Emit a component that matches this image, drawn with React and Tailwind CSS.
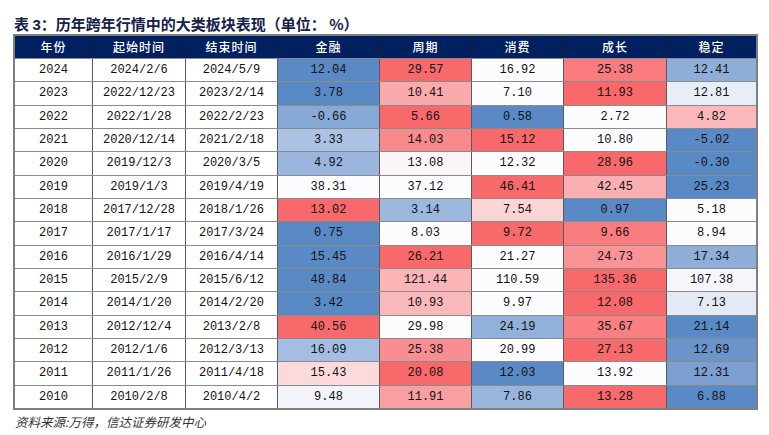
import React from "react";

const W = "#fcfcff";
const B = "#5a8ac6";
const R = "#f8696b";

const rows = [
  ["2024", "2024/2/6", "2024/5/9", ["12.04", B], ["29.57", R], ["16.92", W], ["25.38", "#f97b7d"], ["12.41", "#8eaed8"]],
  ["2023", "2022/12/23", "2023/2/14", ["3.78", B], ["10.41", "#fbaaac"], ["7.10", W], ["11.93", R], ["12.81", "#e8eef8"]],
  ["2022", "2022/1/28", "2022/2/23", ["-0.66", "#87a9d5"], ["5.66", R], ["0.58", B], ["2.72", W], ["4.82", "#fbb8ba"]],
  ["2021", "2020/12/14", "2021/2/18", ["3.33", "#aac2e3"], ["14.03", "#f98a8c"], ["15.12", R], ["10.80", W], ["-5.02", B]],
  ["2020", "2019/12/3", "2020/3/5", ["4.92", "#9ab6de"], ["13.08", "#fcf6f8"], ["12.32", W], ["28.96", R], ["-0.30", B]],
  ["2019", "2019/1/3", "2019/4/19", ["38.31", W], ["37.12", W], ["46.41", R], ["42.45", "#fab0b2"], ["25.23", B]],
  ["2018", "2017/12/28", "2018/1/26", ["13.02", R], ["3.14", "#9cb8df"], ["7.54", "#fcd4d6"], ["0.97", B], ["5.18", W]],
  ["2017", "2017/1/17", "2017/3/24", ["0.75", B], ["8.03", W], ["9.72", R], ["9.66", "#f97c7e"], ["8.94", W]],
  ["2016", "2016/1/29", "2016/4/14", ["15.45", B], ["26.21", R], ["21.27", W], ["24.73", "#f99395"], ["17.34", "#8eaed8"]],
  ["2015", "2015/2/9", "2015/6/12", ["48.84", B], ["121.44", "#fbb5b7"], ["110.59", W], ["135.36", R], ["107.38", "#f4f6fc"]],
  ["2014", "2014/1/20", "2014/2/20", ["3.42", B], ["10.93", "#fbb8ba"], ["9.97", W], ["12.08", R], ["7.13", "#e3eaf6"]],
  ["2013", "2012/12/4", "2013/2/8", ["40.56", R], ["29.98", W], ["24.19", "#92b1da"], ["35.67", "#f97f81"], ["21.14", B]],
  ["2012", "2012/1/6", "2012/3/13", ["16.09", "#a3bee2"], ["25.38", "#f98e90"], ["20.99", W], ["27.13", R], ["12.69", "#6a95cb"]],
  ["2011", "2011/1/26", "2011/4/18", ["15.43", "#fcdadc"], ["20.08", R], ["12.03", B], ["13.92", W], ["12.31", "#7a9fd0"]],
  ["2010", "2010/2/8", "2010/4/2", ["9.48", "#f3f3fc"], ["11.91", "#fa9fa1"], ["7.86", "#98b5dd"], ["13.28", R], ["6.88", B]],
];

const headers = ["年份", "起始时间", "结束时间", "金融", "周期", "消费", "成长", "稳定"];
const cols = "grid grid-cols-[77px_92px_91px_101px_91px_91px_102px_89px] gap-x-px";
const mono = { fontFamily: '"Liberation Mono", "DejaVu Sans Mono", monospace' };

export default function App() {
  return (
    <div className="w-[769px] h-[435px] bg-white relative overflow-hidden" style={{ fontFamily: '"Noto Sans CJK SC", "Noto Sans", sans-serif' }}>
      <div className="pl-[13px]">
        <div className="h-[34px] flex items-end pl-[1px]">
          <div className="h-[20px] leading-[20px] text-[15px] font-bold text-[#14224a] whitespace-nowrap">
            表 <span style={{ fontFamily: '"Liberation Sans", sans-serif' }}>3</span>：历年跨年行情中的大类板块表现（单位： %）
          </div>
        </div>
        <div className="w-[745px] border-2 border-[#7f7f7f] bg-[#8a8a8a] flex flex-col gap-y-px">
          <div className={`${cols} bg-[#1e1e2a]`}>
            {headers.map((h) => (
              <div key={h} className="h-[22px] bg-[#002060] text-white text-[12px] font-medium flex items-center justify-center tracking-[1px]">
                {h}
              </div>
            ))}
          </div>
          {rows.map((r) => (
            <div key={r[0]} className={`${cols} bg-[#5a5a5a]`}>
              {r.map((c, i) => {
                const text = Array.isArray(c) ? c[0] : c;
                const bg = Array.isArray(c) ? c[1] : "#ffffff";
                return (
                  <div
                    key={i}
                    className="h-[22.33px] flex items-center justify-center text-[12px] text-[#111]"
                    style={{ ...mono, background: bg }}
                  >
                    {text}
                  </div>
                );
              })}
            </div>
          ))}
        </div>
        <div className="mt-[3px] pl-[2px] h-[18px] leading-[18px] text-[12.5px] italic text-[#333]">
          资料来源:万得，信达证券研发中心
        </div>
      </div>
    </div>
  );
}
